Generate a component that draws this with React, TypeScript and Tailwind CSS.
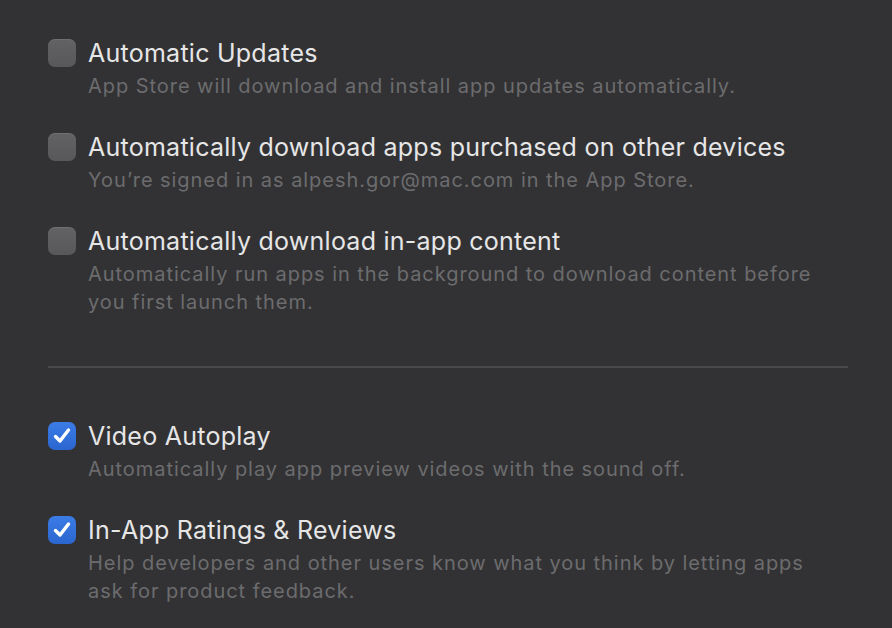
import React from 'react';

type Item = { title: string; desc: string; checked: boolean };

const top: Item[] = [
  { title: 'Automatic Updates', desc: 'App Store will download and install app updates automatically.', checked: false },
  { title: 'Automatically download apps purchased on other devices', desc: 'You’re signed in as alpesh.gor@mac.com in the App Store.', checked: false },
  { title: 'Automatically download in-app content', desc: 'Automatically run apps in the background to download content before you first launch them.', checked: false },
];

const bottom: Item[] = [
  { title: 'Video Autoplay', desc: 'Automatically play app preview videos with the sound off.', checked: true },
  { title: 'In-App Ratings & Reviews', desc: 'Help developers and other users know what you think by letting apps ask for product feedback.', checked: true },
];

const Checkbox = ({ checked }: { checked: boolean }) =>
  checked ? (
    <div className="w-[28px] h-[28px] shrink-0 rounded-[7px] bg-gradient-to-b from-[#3b7ce6] to-[#2b66d0] flex items-center justify-center">
      <svg width="22" height="22" viewBox="0 0 22 22" fill="none">
        <path d="M4.5 11.5 L9 16 L17.5 5" stroke="white" strokeWidth="3.4" strokeLinecap="round" strokeLinejoin="round" />
      </svg>
    </div>
  ) : (
    <div className="w-[28px] h-[28px] shrink-0 rounded-[7px] bg-gradient-to-b from-[#626264] to-[#58585a] border-t border-[#707072]" />
  );

const Row = ({ item }: { item: Item }) => (
  <div className="flex gap-[12px]">
    <div className="pt-[5px]">
      <Checkbox checked={item.checked} />
    </div>
    <div className="flex flex-col">
      <div className="text-[25px] leading-[38px] tracking-[0.25px] text-[#e6e6e7]">{item.title}</div>
      <div className="text-[20px] leading-[28px] tracking-[0.95px] text-[#6c6c6e] max-w-[740px]">{item.desc}</div>
    </div>
  </div>
);

export default function App() {
  return (
    <div className="w-[892px] h-[628px] bg-[#323234] overflow-hidden" style={{ fontFamily: 'Inter, "Noto Sans", sans-serif' }}>
      <div className="pl-[48px] pr-[44px] pt-[34px]">
        <div className="flex flex-col gap-[28px]">
          {top.map((it) => (
            <Row key={it.title} item={it} />
          ))}
        </div>
        <div className="h-[2px] bg-[#4a4a4c] mt-[50px] mb-[49px]" />
        <div className="flex flex-col gap-[28px]">
          {bottom.map((it) => (
            <Row key={it.title} item={it} />
          ))}
        </div>
      </div>
    </div>
  );
}
